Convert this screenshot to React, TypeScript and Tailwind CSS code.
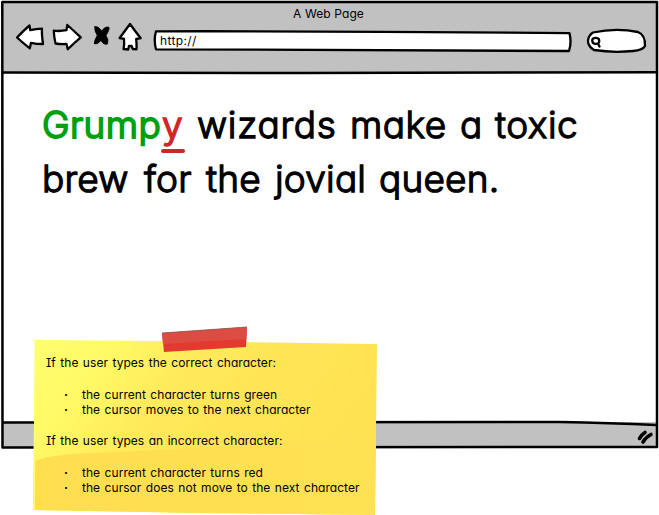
import type { ReactNode } from "react";

const hand =
  "[font-family:Inter,'Liberation_Sans',sans-serif] [font-feature-settings:'cv11','cv08','calt'_0]";

function Toolbar() {
  return (
    <header className="h-[73px] bg-[#c1c1c1] flex flex-col">
      <h1 className="h-[27px] text-center text-[12px] leading-[27px] tracking-[0.1px] text-black">A Web Page</h1>
      <div className="relative h-[46px] flex items-start">
        <svg className="absolute left-0 -top-[27px]" width="659" height="73" fill="none" stroke="#000" strokeWidth="2.3" strokeLinejoin="round" strokeLinecap="round">
          <g fill="#fff">
            <path d="M17 37.5 Q23 31 29.5 25.5 L30.3 30.2 Q36 29 42 28.6 Q41.5 33 43 44 Q36 44 31 42.8 L29.8 48.3 Q23 43 17 37.5Z" />
            <path d="M53.8 30.7 Q60 31.5 66.5 30.2 L67.3 25 Q74 31 80.8 37.3 Q74 43 67.8 49.3 L66.5 44 Q61 44.5 55.5 43.5 Q54 37 53.8 30.7Z" />
            <path d="M130 24 Q135 31 140.7 38.2 L136.2 39 Q136.8 44 136.5 49.3 L132.8 49 L131.5 45.8 L129 46 L128.2 49.5 L123.6 49 Q124.5 44 124 38.8 L119.6 38 Q124.5 31.5 130 24Z" />
            <path d="M156 31.3 Q362 31 569.5 33.2 Q571.8 42 569 51 Q362 51 156 49.3 Q153.5 40 156 31.3Z" />
            <path d="M593 32.5 Q616 27.5 638 32 Q645.5 35 645 46 Q643 50 633 51 Q613 53 594 50 Q587.5 46 588 40 Q589 35 593 32.5Z" />
            <path d="M593 38.5 Q596 37 598.8 39 Q600 42 598 43.5 Q595 44.5 593 43 Q591.5 40.5 593 38.5Z M598 43.5 L599.5 46.5" />
          </g>
          <path d="M94.8 26.8 Q97.5 25.5 101.8 31 Q105 26 109 27.3 Q109.8 29.5 106 35.5 Q109 40 107.5 44 Q104 45.5 101 40.5 Q97 45 94.3 43.8 Q94 41 97.2 35.5 Q94 30 94.8 26.8Z" fill="#000" strokeWidth="0.8" />
        </svg>
        <span className="relative ml-[160px] mt-[6px] text-[12px] leading-[16px] tracking-[0.35px]">http://</span>
      </div>
    </header>
  );
}

function Prompt() {
  return (
    <main className="h-[349px] bg-white pl-[42px] pt-[25px] text-[37px] leading-[54px] font-light text-black [-webkit-text-stroke:1.3px_currentColor] [stroke-linejoin:round]">
      <div className="flex whitespace-nowrap">
        <span className="w-[120px] tracking-[0.4px] text-[#00a010] [-webkit-text-stroke:1.8px_currentColor]">Grump</span>
        <span className="relative w-[35px] text-[#cf2727] [-webkit-text-stroke:1.6px_currentColor]">
          y
          <i className="absolute -left-[1px] top-[51px] h-[4px] w-[24px] rounded-full bg-[#cf2727]" />
        </span>
        <span className="w-[153px] tracking-[0.7px]">wizards</span>
        <span className="w-[110px] tracking-[0.5px]">make</span>
        <span className="w-[35px]">a</span>
        <span className="tracking-[0.5px]">toxic</span>
      </div>
      <div className="flex whitespace-nowrap tracking-[0.2px]">
        <span className="w-[102px]">brew</span>
        <span className="w-[62px]">for</span>
        <span className="w-[69px]">the</span>
        <span className="w-[104px]">jovial</span>
        <span>queen.</span>
      </div>
    </main>
  );
}

function Frame() {
  return (
    <svg className="absolute left-0 top-0" width="659" height="450" fill="none" stroke="#000" strokeWidth="2.5" strokeLinejoin="round" strokeLinecap="round">
      <path d="M2.3 2 L657 2 Q656.3 220 657 447 Q330 447.5 2.5 447.5 Q3 220 2.3 2Z" />
      <path d="M3 72.5 Q330 73.5 657 72.3" />
      <path d="M3 422.5 L560 422 Q610 423 656 425" />
      <path d="M639.5 438.5 Q641 435 645 432.5 M643 442 Q646 437 651 434.5" strokeWidth="3.6" />
    </svg>
  );
}

function Bullet({ children }: { children: ReactNode }) {
  return (
    <li className="flex h-[15px]">
      <span className="w-[18px] font-bold">·</span>
      {children}
    </li>
  );
}

function StickyNote() {
  return (
    <aside className="absolute left-[32px] top-[324px] h-[191px] w-[347px]">
      <svg className="absolute left-0 top-0" width="347" height="191">
        <defs>
          <linearGradient id="paper" x1="0" y1="0" x2="1" y2="0.4">
            <stop offset="0" stopColor="#ffff70" />
            <stop offset="0.22" stopColor="#fff966" />
            <stop offset="0.42" stopColor="#ffeb5c" />
            <stop offset="0.65" stopColor="#ffe556" />
            <stop offset="1" stopColor="#ffe251" />
          </linearGradient>
          <linearGradient id="fold" x1="0" y1="0" x2="1" y2="0">
            <stop offset="0" stopColor="#ffde50" />
            <stop offset="1" stopColor="#ffe253" />
          </linearGradient>
        </defs>
        <path d="M3 16 L130 17 L345 20 L343 191 L170 189 L1 186 Z" fill="url(#paper)" />
        <path d="M2 138 Q12 131 60 129 Q130 126 200 122 L344 112 L343 191 L170 189 L1 186 Z" fill="url(#fold)" />
        <path d="M3.5 16 L2 186" stroke="#ffff70" strokeWidth="1.5" />
        <path d="M130 9 L215 3 L214 23 L132 28 Z" fill="#e3392e" />
        <path d="M130 9 L215 3 L214.5 15 L131 20 Z" fill="#dc4c42" />
        <path d="M130 9 L215 3" stroke="#80605c" strokeWidth="0.8" />
      </svg>
      <div className="relative ml-[14px] pt-[31px] text-[12px] leading-[15px] tracking-[0.05px] [word-spacing:1px] text-black whitespace-nowrap">
        <p className="h-[32px]">If the user types the correct character:</p>
        <ul className="ml-[18px] h-[46px]">
          <Bullet>the current character turns green</Bullet>
          <Bullet>the cursor moves to the next character</Bullet>
        </ul>
        <p className="h-[32px]">If the user types an incorrect character:</p>
        <ul className="ml-[18px]">
          <Bullet>the current character turns red</Bullet>
          <Bullet>the cursor does not move to the next character</Bullet>
        </ul>
      </div>
    </aside>
  );
}

export default function App() {
  return (
    <div className={`relative h-[515px] w-[659px] overflow-hidden bg-white ${hand}`}>
      <div className="w-[657px] [clip-path:inset(1px_0_0_2px)]">
        <Toolbar />
        <Prompt />
        <footer className="h-[26px] bg-[#c1c1c1]" />
      </div>
      <Frame />
      <StickyNote />
    </div>
  );
}
